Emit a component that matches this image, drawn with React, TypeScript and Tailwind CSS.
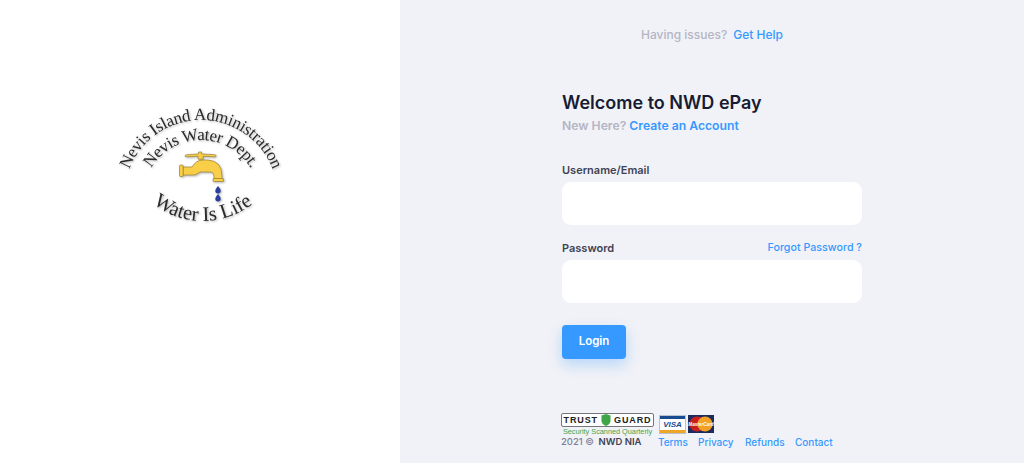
const font = "font-['Inter','Liberation_Sans',sans-serif]"

function Logo() {
  return (
    <svg width="180" height="130" viewBox="110 100 180 130" className="drop-shadow-[1px_1px_1px_rgba(0,0,0,0.3)]">
      <defs>
        <path id="arcOuter" d="M 124 197 A 77 77 0 0 1 278 197" />
        <path id="arcInner" d="M 143 198 A 58 58 0 0 1 259 198" />
        <path id="arcBottom" d="M 122 140 A 81 81 0 0 0 284 140" />
      </defs>
      <g fontFamily="'Liberation Serif', serif" fill="#2a2a2a">
        <text fontSize="17" letterSpacing="-0.25">
          <textPath href="#arcOuter" startOffset="50%" textAnchor="middle">Nevis Island Administration</textPath>
        </text>
        <text fontSize="17" letterSpacing="-0.35">
          <textPath href="#arcInner" startOffset="50%" textAnchor="middle">Nevis Water Dept.</textPath>
        </text>
        <text fontSize="20.5">
          <textPath href="#arcBottom" startOffset="50%" textAnchor="middle">Water Is Life</textPath>
        </text>
      </g>
      {/* faucet */}
      <g fill="#f9cf4a" stroke="#8a7226" strokeWidth="0.6">
        <path d="M185 156 q0 -1.2 2 -1.3 l11.5 -0.8 v-1.9 h3 v1.9 l13 0.8 q1.8 0.2 1.6 1.3 q-0.3 1 -2 0.8 l-11 -0.6 v3 h-5 v-3 l-11 0.6 q-2.3 0.2 -2.1 -0.8 z" />
        <path d="M183 167 H192 Q196 160 203 160 H208 Q222 161 222 176 V179 H214 V177 Q214 172 210 172 H200 Q196 176 190 175 H183 Z" />
        <rect x="213" y="178.5" width="10.5" height="3" rx="0.5" />
        <rect x="179.5" y="165" width="3.6" height="11.5" rx="1" />
      </g>
      <g fill="#2c3e9e">
        <path d="M218 186 q2.7 3 2.7 4.8 a2.7 2.7 0 0 1 -5.4 0 q0 -1.8 2.7 -4.8 z" />
        <path d="M218 194 q2.7 3 2.7 4.8 a2.7 2.7 0 0 1 -5.4 0 q0 -1.8 2.7 -4.8 z" />
      </g>
    </svg>
  )
}

function TrustGuard() {
  return (
    <div className="flex w-[93px] flex-col items-center">
      <div className="flex h-[14px] w-[93px] items-center justify-center gap-[3px] rounded-[2px] border border-[#777] bg-white font-['Liberation_Sans',sans-serif] text-[9px] leading-none font-bold tracking-[0.1em] text-[#222]">
        <span>TRUST</span>
        <svg width="10" height="12" viewBox="0 0 11 13">
          <path d="M0.5 1.5 L5.5 0 L10.5 1.5 V7 Q10.5 11 5.5 13 Q0.5 11 0.5 7 Z" fill="#3fa648" />
        </svg>
        <span>GUARD</span>
      </div>
      <span className="mt-[1px] font-['Liberation_Sans',sans-serif] text-[7.3px] leading-[8px] whitespace-nowrap text-[#3aa655]">
        Security Scanned Quarterly
      </span>
    </div>
  )
}

function Visa() {
  return (
    <div className="flex h-[19px] w-[27px] flex-col justify-between border border-[#b9c2cc] bg-white">
      <div className="h-[3px] bg-[#1a4a8f]" />
      <span className="text-center font-['Liberation_Sans',sans-serif] text-[8px] leading-none font-bold text-[#1a4a8f] italic">VISA</span>
      <div className="h-[3px] bg-[#eda62a]" />
    </div>
  )
}

function MasterCard() {
  return (
    <svg width="26" height="18" viewBox="0 0 26 18">
      <rect width="26" height="18" fill="#1c2a5c" />
      <circle cx="9" cy="9" r="7.6" fill="#c8201f" />
      <circle cx="17" cy="9" r="7.6" fill="#f2a126" />
      <text x="13" y="10.6" textAnchor="middle" fontSize="4.6" fontStyle="italic" fontWeight="700" fontFamily="'Liberation Sans', sans-serif" fill="#fff">MasterCard</text>
    </svg>
  )
}

export default function App() {
  return (
    <div className={`flex h-screen overflow-hidden bg-white ${font}`}>
      {/* Aside */}
      <div className="flex w-[400px] shrink-0 justify-center bg-white pt-[100px]">
        <div className="h-[130px]">
          <Logo />
        </div>
      </div>

      {/* Content */}
      <div className="flex flex-1 flex-col items-center bg-[#f1f2f7]">
        <div className="mt-[26px] flex h-[17px] items-center text-[12px] font-medium">
          <span className="text-[#b5b5c3]">Having issues?</span>
          <a href="#" className="ml-[6px] text-[#3699ff]">Get Help</a>
        </div>

        <div className="mt-[48px] flex w-[300px] flex-col">
          <h1 className="text-[18px] leading-[24px] font-semibold text-[#181c32]">Welcome to NWD ePay</h1>
          <div className="mt-[2px] text-[12.2px] leading-[18px] font-semibold">
            <span className="text-[#b5b5c3]">New Here?</span>{' '}
            <a href="#" className="text-[#3699ff]">Create an Account</a>
          </div>

          <label className="mt-[27px] text-[11px] leading-[16px] font-semibold text-[#3f4254]">Username/Email</label>
          <input className="mt-[4px] h-[43px] w-full rounded-[9px] bg-white outline-none" />

          <div className="mt-[15px] flex h-[16px] items-center justify-between">
            <label className="text-[11px] leading-[16px] font-semibold text-[#3f4254]">Password</label>
            <a href="#" className="text-[10.7px] font-medium text-[#3699ff]">Forgot Password ?</a>
          </div>
          <input type="password" className="mt-[4px] h-[43px] w-full rounded-[9px] bg-white outline-none" />

          <button className="mt-[22px] h-[34px] w-[64px] rounded-[4px] bg-[#3699ff] text-[11.5px] font-semibold text-white shadow-[0_6px_14px_rgba(54,153,255,0.3)]">
            Login
          </button>
        </div>

        <div className="mt-[54px] flex w-[302px] flex-col">
          <div className="flex items-start gap-[5px]">
            <TrustGuard />
            <div className="mt-[2px] flex gap-[2px]">
              <Visa />
              <MasterCard />
            </div>
          </div>
          <div className="flex h-[12px] items-center text-[10px] font-medium">
            <span className="w-[97px] text-[9.5px] text-[#7e8299]">
              2021 © <span className="ml-[2px] font-semibold text-[#3f4254]">NWD NIA</span>
            </span>
            <div className="flex text-[#3699ff]">
              <a href="#" className="w-[40px]">Terms</a>
              <a href="#" className="w-[47px]">Privacy</a>
              <a href="#" className="w-[50px]">Refunds</a>
              <a href="#">Contact</a>
            </div>
          </div>
        </div>
      </div>
    </div>
  )
}
